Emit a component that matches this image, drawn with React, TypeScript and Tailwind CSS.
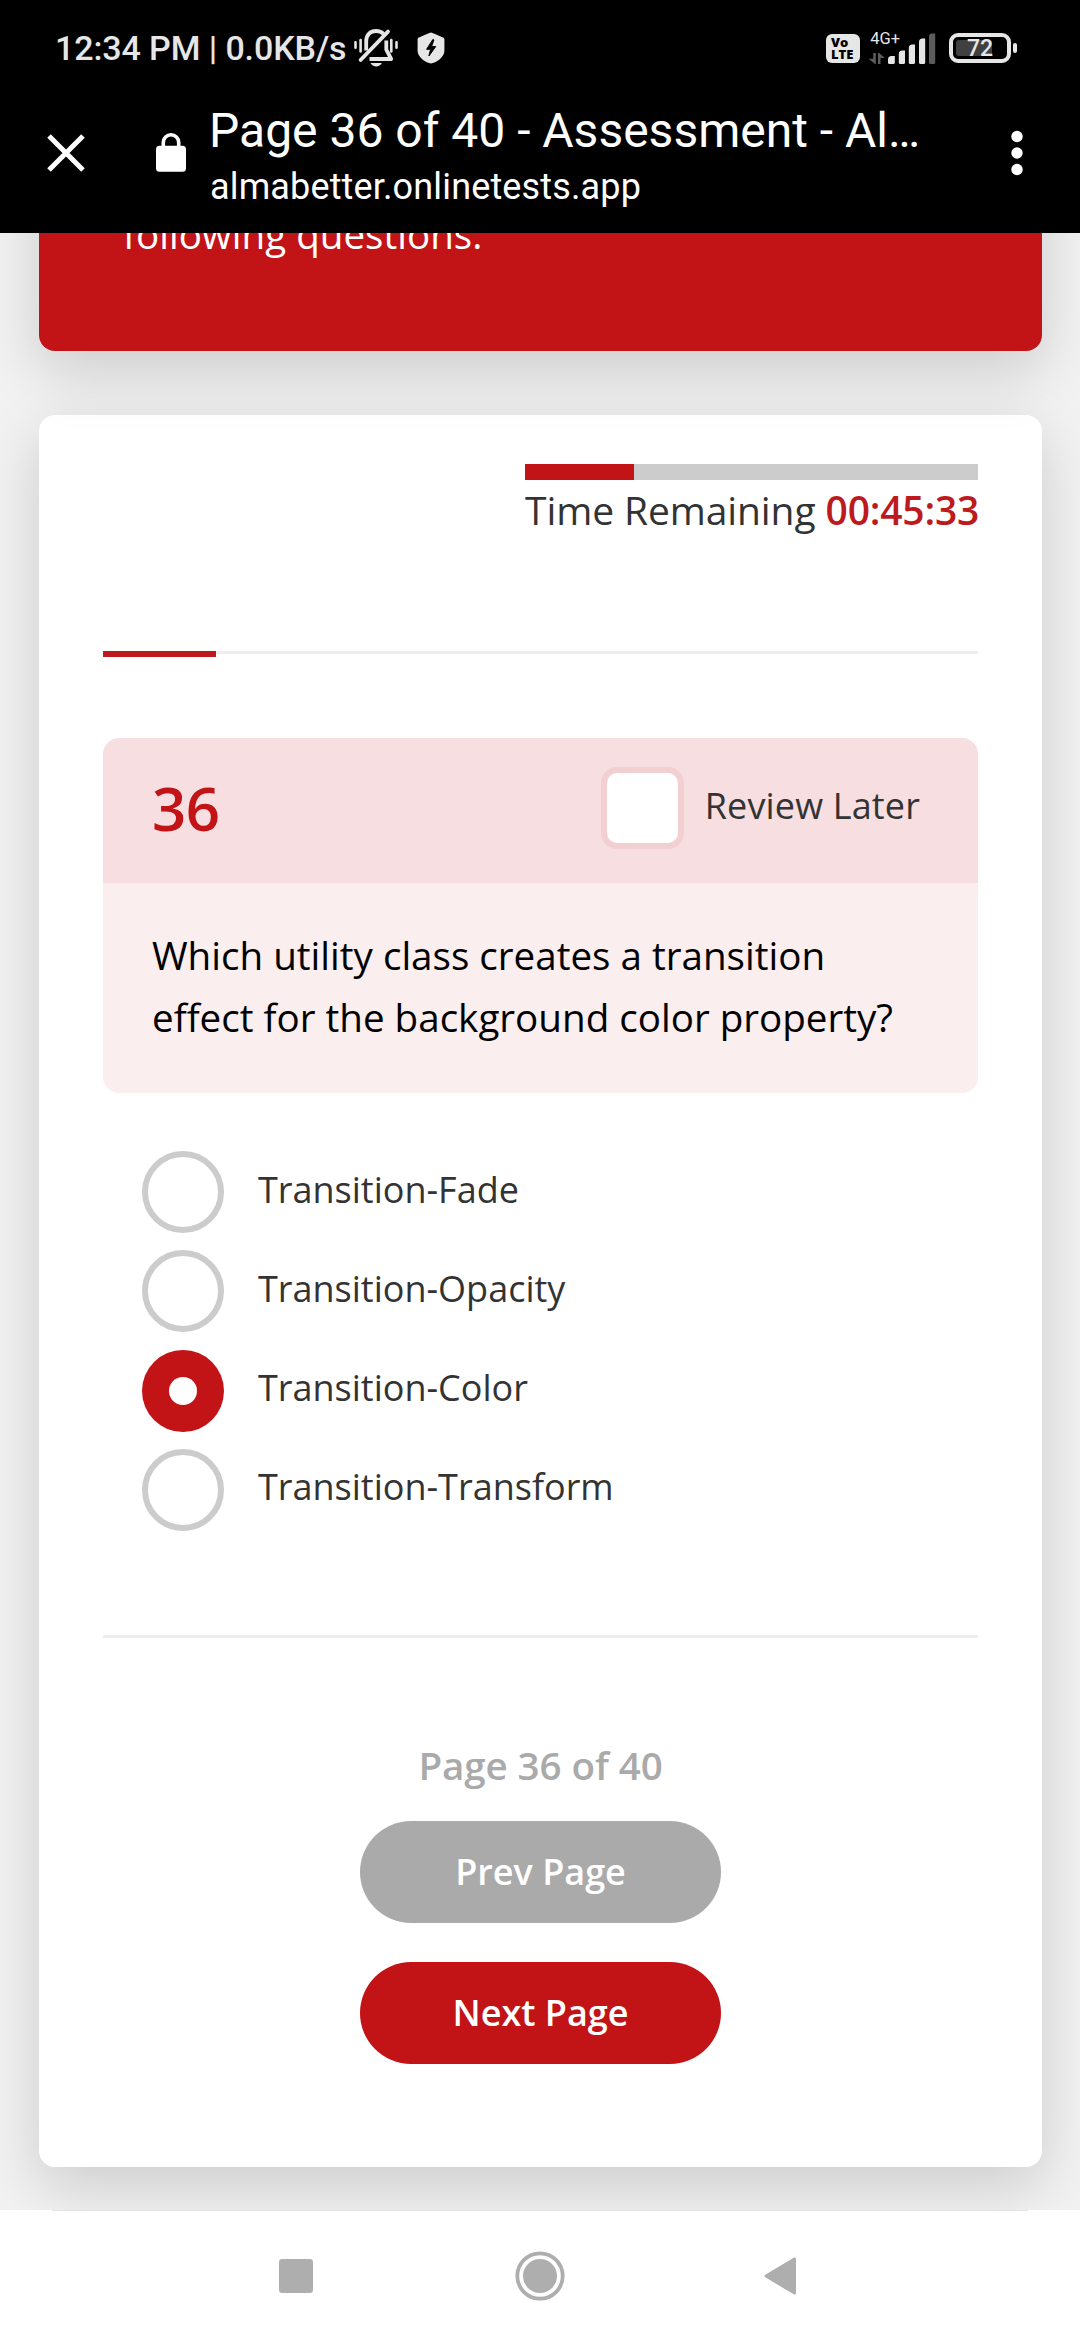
const ANSWERS = [
  { label: "Transition-Fade", selected: false },
  { label: "Transition-Opacity", selected: false },
  { label: "Transition-Color", selected: true },
  { label: "Transition-Transform", selected: false },
];

function MutedBellIcon() {
  return (
    <svg width="45" height="39" viewBox="0 0 45 39" fill="none" className="mt-[-1px] shrink-0">
      <g stroke="#e6e6e6" strokeWidth="2.6" strokeLinecap="round">
        <path d="M1.5 14.3v5.4M6.6 12v11.4M37.3 12v11.4M42.5 14.3v5.4" />
      </g>
      <path
        d="M12.2 22.5V13.5C12.2 6.5 16.5 3 22 3c3.2 0 5.8 1 7.6 3"
        stroke="#e6e6e6"
        strokeWidth="3.8"
        strokeLinejoin="round"
      />
      <path d="M32.3 12.5v9.2l4.9 9.3H15.5" stroke="#e6e6e6" strokeWidth="3.8" strokeLinejoin="round" />
      <path d="M6.6 32 34 3.6" stroke="#e6e6e6" strokeWidth="3.8" strokeLinecap="round" />
      <path d="M16.5 35h11.4c-1.3 2.4-3.2 3.4-5.7 3.4s-4.4-1-5.7-3.4Z" fill="#e6e6e6" />
    </svg>
  );
}

function ShieldIcon() {
  return (
    <svg width="28" height="32" viewBox="0 0 28 32" className="shrink-0">
      <path
        d="M14 .4C15 .4 24.8 4.8 26.2 5.5c.8.4 1.2 1 1.2 2v11.5c0 6-8.6 12.4-13.4 12.4S.6 25 .6 19V7.5c0-1 .4-1.6 1.2-2C3.2 4.8 13 .4 14 .4Z"
        fill="#e6e6e6"
      />
      <path d="M15.8 7.5 9.6 17.3h4L11.9 24l6.9-9.5h-4.2l2.3-6.6Z" fill="#000" stroke="#000" strokeLinejoin="round" />
    </svg>
  );
}

function SignalIcon() {
  return (
    <svg width="68" height="34" viewBox="0 0 68 34" className="ml-[8px] shrink-0 overflow-visible">
      <text x="2.3" y="12.6" fontSize="16.5" fill="#e6e6e6" className="font-['Roboto',sans-serif]">
        4G+
      </text>
      <g fill="#5c5c5c">
        <path d="M5.3 22h2.5v11H7L.6 27.7h4.7ZM10 22h1.2l5.6 5h-4.3v6H10Z" />
        <path d="M61 5.5a3 3 0 0 1 3-3h3.2V31.6a1.5 1.5 0 0 1-1.5 1.5H62.5A1.5 1.5 0 0 1 61 31.6Z" />
      </g>
      <g fill="#e6e6e6">
        <path d="M20 28.5a3.5 3.5 0 0 1 3.5-3.5H26.8V31.6a1.5 1.5 0 0 1-1.5 1.5H21.5A1.5 1.5 0 0 1 20 31.6Z" />
        <path d="M30.8 23a3.5 3.5 0 0 1 3.5-3.5H37V31.6a1.5 1.5 0 0 1-1.5 1.5H32.3a1.5 1.5 0 0 1-1.5-1.5Z" />
        <path d="M40.8 17a3.5 3.5 0 0 1 3.5-3.5H47V31.6a1.5 1.5 0 0 1-1.5 1.5H42.3a1.5 1.5 0 0 1-1.5-1.5Z" />
        <path d="M51 11a3.5 3.5 0 0 1 3.5-3.5H57.2V31.6a1.5 1.5 0 0 1-1.5 1.5H52.5a1.5 1.5 0 0 1-1.5-1.5Z" />
      </g>
    </svg>
  );
}

function StatusBar() {
  return (
    <div className="flex h-24 items-center pl-[55px] pr-[63px] text-[#e6e6e6]">
      <span className="w-[299px] text-[34px] font-medium leading-[96px] tracking-[-0.1px] whitespace-nowrap">
        12:34 PM | 0.0KB/s
      </span>
      <MutedBellIcon />
      <div className="ml-[18px]">
        <ShieldIcon />
      </div>
      <div className="ml-auto flex h-[29px] w-[34px] flex-col justify-center rounded-[6px] bg-[#e6e6e6] pl-[5px] font-['Open_Sans',sans-serif] text-[13px] font-extrabold leading-[12.5px] text-black">
        <span>Vo</span>
        <span>LTE</span>
      </div>
      <SignalIcon />
      <div className="ml-[13px] flex items-center gap-[2px]">
        <div className="relative flex h-[30px] w-[62px] items-center rounded-[9px] border-4 border-[#e6e6e6] pl-[3px]">
          <div className="h-4 w-[36px] rounded-[3px] bg-[#404040]" />
          <span className="absolute left-[14px] top-0 text-[23px] font-medium leading-[23px]">72</span>
        </div>
        <div className="h-[10px] w-1 rounded-full bg-[#e6e6e6]" />
      </div>
    </div>
  );
}

function BrowserBar() {
  return (
    <div className="flex h-[137px] items-start text-white">
      <svg width="40" height="40" viewBox="0 0 40 40" className="ml-[46px] mt-[37px] shrink-0">
        <path d="M3 3 37 37M37 3 3 37" stroke="white" strokeWidth="5" />
      </svg>
      <svg width="30" height="39" viewBox="0 0 30 39" className="ml-[70px] mt-[37px] shrink-0">
        <path d="M7.3 15V9.5a7.7 7.7 0 0 1 15.4 0V15" fill="none" stroke="white" strokeWidth="3.6" />
        <rect y="12.8" width="30" height="26" rx="3.5" fill="white" />
      </svg>
      <div className="ml-[23px] mt-[7px] flex flex-col whitespace-nowrap">
        <span className="text-[48px] leading-[56px]">Page 36 of 40 - Assessment - Al…</span>
        <span className="mt-[6px] pl-[1px] text-[36px] leading-[44px] tracking-[0.15px]">almabetter.onlinetests.app</span>
      </div>
      <svg width="14" height="50" viewBox="0 0 14 50" fill="white" className="ml-auto mr-[56px] mt-8 shrink-0">
        <circle cx="7" cy="8.5" r="5.7" />
        <circle cx="7" cy="25" r="5.7" />
        <circle cx="7" cy="41.5" r="5.7" />
      </svg>
    </div>
  );
}

function Radio({ selected }: { selected: boolean }) {
  return selected ? (
    <span className="flex size-[82px] items-center justify-center rounded-full bg-[#c21317]">
      <span className="size-7 rounded-full bg-white" />
    </span>
  ) : (
    <span className="size-[82px] rounded-full border-[6px] border-[#cccccc]" />
  );
}

function QuestionCard() {
  return (
    <section className="ml-[39px] mr-[38px] mt-16 h-[1752px] rounded-2xl bg-white px-16 pt-[49px] shadow-[0_20px_62px_rgba(0,0,0,0.16)]">
      <div className="ml-auto w-[453px]">
        <div className="h-4 bg-[#cccccc]">
          <div className="h-4 w-[109px] bg-[#c21317]" />
        </div>
        <p className="mt-[2px] text-[39px] leading-[56px] tracking-[-0.1px] whitespace-nowrap">
          Time Remaining <span className="font-semibold tracking-[-0.2px] text-[#bd1a1e]">00:45:33</span>
        </p>
      </div>

      <div className="mt-[113px] flex h-[6px] items-start">
        <div className="h-[6px] w-[113px] bg-[#bd1a1e]" />
        <div className="h-[3px] flex-1 bg-[#eeeeee]" />
      </div>

      <div className="mt-[81px] overflow-hidden rounded-2xl">
        <div className="flex h-[145px] items-start bg-[#f6dee1] pl-[49px] pr-[58px]">
          <span className="pt-[30px] text-[60px] font-semibold leading-[80px] tracking-[-0.5px] text-[#c21317]">36</span>
          <div className="ml-auto mt-[29px] h-[82px] w-[83px] rounded-2xl border-[6px] border-[#f2d0d2] bg-white" />
          <span className="ml-[21px] pt-[42px] text-[36px] leading-[52px] tracking-[0.15px]">Review Later</span>
        </div>
        <p className="h-[210px] bg-[#faeeee] pl-[49px] pt-[41px] text-[38.6px] leading-[62px] text-black">
          Which utility class creates a transition
          <br />
          effect for the background color property?
        </p>
      </div>

      <div className="mt-[58px] flex flex-col gap-[17.33px] pl-[39px]">
        {ANSWERS.map((answer) => (
          <div key={answer.label} className="flex h-[82px] items-center">
            <Radio selected={answer.selected} />
            <span className="ml-[34px] pb-[5px] text-[36px] leading-[52px]">{answer.label}</span>
          </div>
        ))}
      </div>

      <div className="mt-[104px] h-[3px] bg-[#eeeeee]" />

      <div className="flex flex-col items-center font-semibold">
        <p className="mt-[99px] text-[38.6px] leading-[56px] tracking-[-0.1px] text-[#aaaaaa]">Page 36 of 40</p>
        <button className="mt-[28px] h-[102px] w-[361px] rounded-full bg-[#aaaaaa] text-[36px] leading-[52px] text-white">
          Prev Page
        </button>
        <button className="mt-[39px] h-[102px] w-[361px] rounded-full bg-[#c21317] text-[36px] leading-[52px] text-white">
          Next Page
        </button>
      </div>
    </section>
  );
}

function NavigationBar() {
  return (
    <nav className="h-[130px] bg-white">
      <div className="mx-[52px] h-px bg-[#e3e3e3]" />
      <div className="flex h-[129px] items-center pl-[279px] text-[#aeaeae]">
        <div className="size-[34px] rounded-[3px] bg-current" />
        <svg width="50" height="50" viewBox="0 0 50 50" className="ml-[202px]">
          <circle cx="25" cy="25" r="22.7" fill="none" stroke="currentColor" strokeWidth="3.8" />
          <circle cx="25" cy="25" r="17" fill="currentColor" />
        </svg>
        <svg width="33" height="38" viewBox="0 0 33 38" className="ml-[199px]">
          <path d="M2 19 30.500 2v34Z" fill="currentColor" stroke="currentColor" strokeWidth="3" strokeLinejoin="round" />
        </svg>
      </div>
    </nav>
  );
}

export default function App() {
  return (
    <div className="flex h-[2340px] w-[1080px] flex-col overflow-hidden bg-[#f2f2f2]">
      <header className="relative z-20 h-[233px] bg-black font-['Roboto',sans-serif]">
        <StatusBar />
        <BrowserBar />
      </header>
      <main className="h-[1977px] overflow-hidden font-['Open_Sans',sans-serif] text-[#333333]">
        <section className="relative z-10 ml-[39px] mr-[38px] mt-[-200px] h-[318px] rounded-2xl bg-[#c21317] pl-[84px] pt-[171px] shadow-[0_20px_62px_rgba(0,0,0,0.16)]">
          <p className="text-[38.6px] leading-[60px] text-white">following questions.</p>
        </section>
        <QuestionCard />
      </main>
      <NavigationBar />
    </div>
  );
}
